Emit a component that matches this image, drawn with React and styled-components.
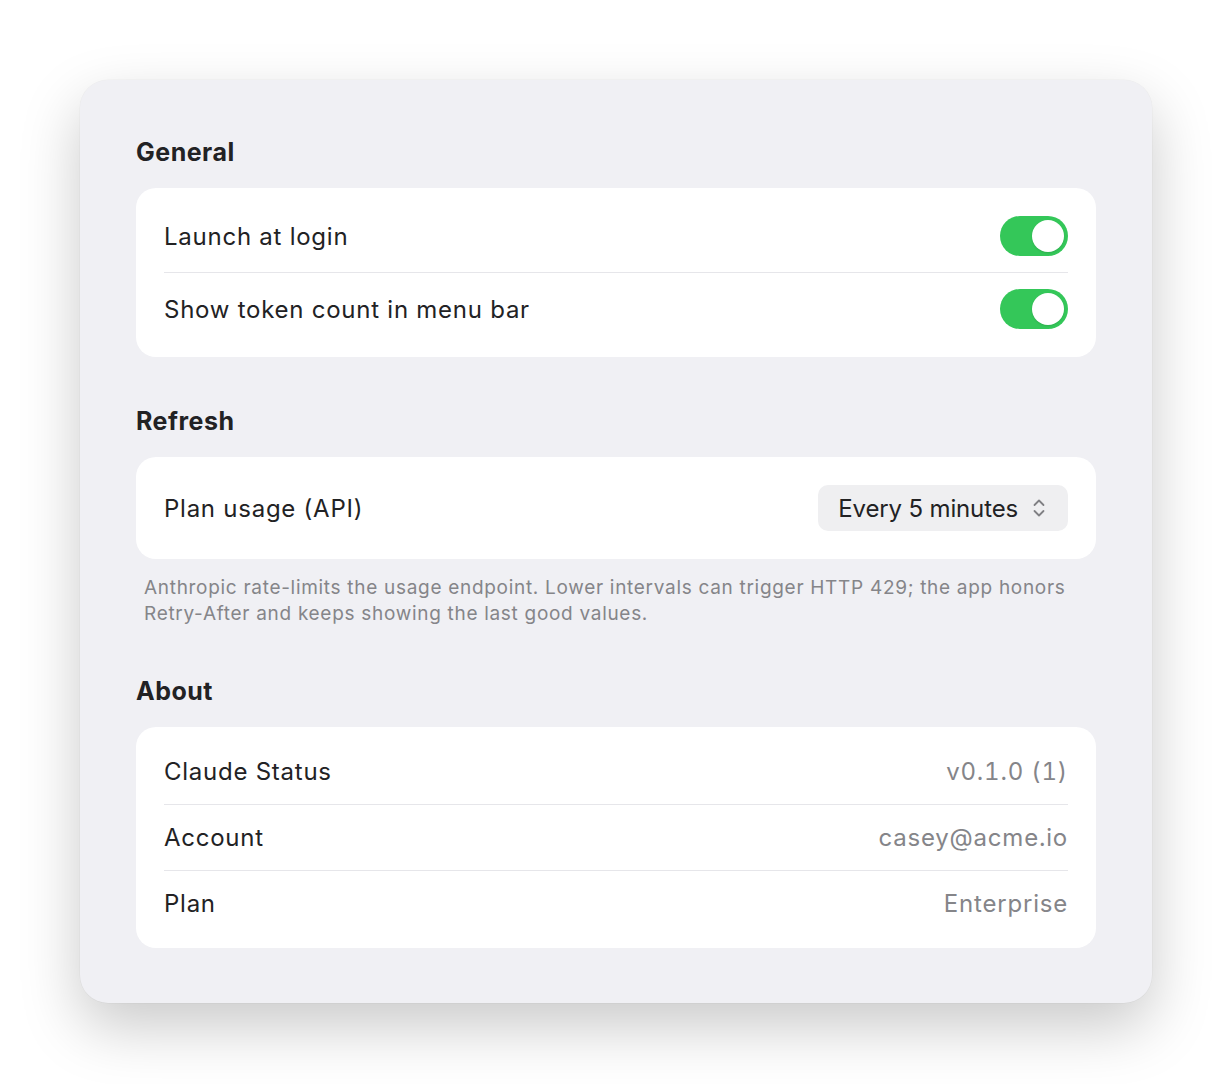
import React from "react";
import styled, { createGlobalStyle } from "styled-components";

const Global = createGlobalStyle`
  html, body { margin: 0; padding: 0; background: #ffffff; }
  body {
    font-family: Inter, "Noto Sans", "Liberation Sans", sans-serif;
    -webkit-font-smoothing: antialiased;
  }
`;

const Page = styled.div`
  padding: 80px;
  min-height: 1084px;
  box-sizing: border-box;
`;

const Window = styled.div`
  width: 1072px;
  box-sizing: border-box;
  background: #f0f0f4;
  border-radius: 28px;
  padding: 56px 56px 55px;
  box-shadow: 0 24px 60px rgba(0, 0, 0, 0.21), 0 0 0 0.5px rgba(0, 0, 0, 0.04);
  display: flex;
  flex-direction: column;
  gap: 48px;
`;

const Section = styled.section`
  display: flex;
  flex-direction: column;
`;

const Heading = styled.h2`
  margin: 0 0 20px;
  font-size: 25px;
  line-height: 32px;
  font-weight: 700;
  color: #222224;
  letter-spacing: 0.5px;
`;

const Card = styled.div`
  background: #ffffff;
  border-radius: 20px;
  padding: 12px 28px;
  display: flex;
  flex-direction: column;
`;

const Row = styled.div`
  display: flex;
  align-items: center;
  justify-content: space-between;
  padding: 16px 0;
  & + & {
    border-top: 1px solid #e6e6ea;
  }
`;

const Label = styled.span`
  font-size: 24px;
  line-height: 33px;
  color: #222224;
  letter-spacing: 0.75px;
`;

const Value = styled.span`
  font-size: 24px;
  line-height: 33px;
  color: #858589;
  letter-spacing: 0.8px;
  font-variant-numeric: tabular-nums;
`;

const Track = styled.div`
  width: 68px;
  height: 40px;
  border-radius: 20px;
  background: ${(p) => (p.$on ? "#34c759" : "#e5e5ea")};
  padding: 4px;
  box-sizing: border-box;
  display: flex;
  justify-content: ${(p) => (p.$on ? "flex-end" : "flex-start")};
`;

const Knob = styled.div`
  width: 32px;
  height: 32px;
  border-radius: 50%;
  background: #ffffff;
  box-shadow: 0 1px 2px rgba(0, 0, 0, 0.12);
`;

const Toggle = ({ on }) => (
  <Track $on={on}>
    <Knob />
  </Track>
);

const Select = styled.div`
  height: 46px;
  box-sizing: border-box;
  padding: 0 22px 0 20px;
  border-radius: 10px;
  background: #efeff1;
  display: flex;
  align-items: center;
  gap: 14px;
  font-size: 24px;
  color: #222224;
  letter-spacing: -0.15px;
`;

const Note = styled.p`
  margin: 16px 8px 0;
  font-size: 19px;
  line-height: 26px;
  color: #858589;
  letter-spacing: 0.7px;
`;

const Chevrons = () => (
  <svg width="14" height="20" viewBox="0 0 14 20" fill="none">
    <path d="M2.5 7 L7 2.5 L11.5 7" stroke="#808084" strokeWidth="1.8" strokeLinecap="round" strokeLinejoin="round" />
    <path d="M2.5 13 L7 17.5 L11.5 13" stroke="#808084" strokeWidth="1.8" strokeLinecap="round" strokeLinejoin="round" />
  </svg>
);

export default function App() {
  return (
    <>
      <Global />
      <Page>
        <Window>
          <Section>
            <Heading>General</Heading>
            <Card>
              <Row>
                <Label>Launch at login</Label>
                <Toggle on />
              </Row>
              <Row>
                <Label>Show token count in menu bar</Label>
                <Toggle on />
              </Row>
            </Card>
          </Section>
          <Section>
            <Heading>Refresh</Heading>
            <Card>
              <Row>
                <Label>Plan usage (API)</Label>
                <Select>
                  <span>Every 5 minutes</span>
                  <Chevrons />
                </Select>
              </Row>
            </Card>
            <Note>
              Anthropic rate-limits the usage endpoint. Lower intervals can trigger HTTP 429; the app honors
              Retry-After and keeps showing the last good values.
            </Note>
          </Section>
          <Section>
            <Heading>About</Heading>
            <Card>
              <Row>
                <Label>Claude Status</Label>
                <Value>v0.1.0 (1)</Value>
              </Row>
              <Row>
                <Label>Account</Label>
                <Value>casey@acme.io</Value>
              </Row>
              <Row>
                <Label>Plan</Label>
                <Value>Enterprise</Value>
              </Row>
            </Card>
          </Section>
        </Window>
      </Page>
    </>
  );
}
